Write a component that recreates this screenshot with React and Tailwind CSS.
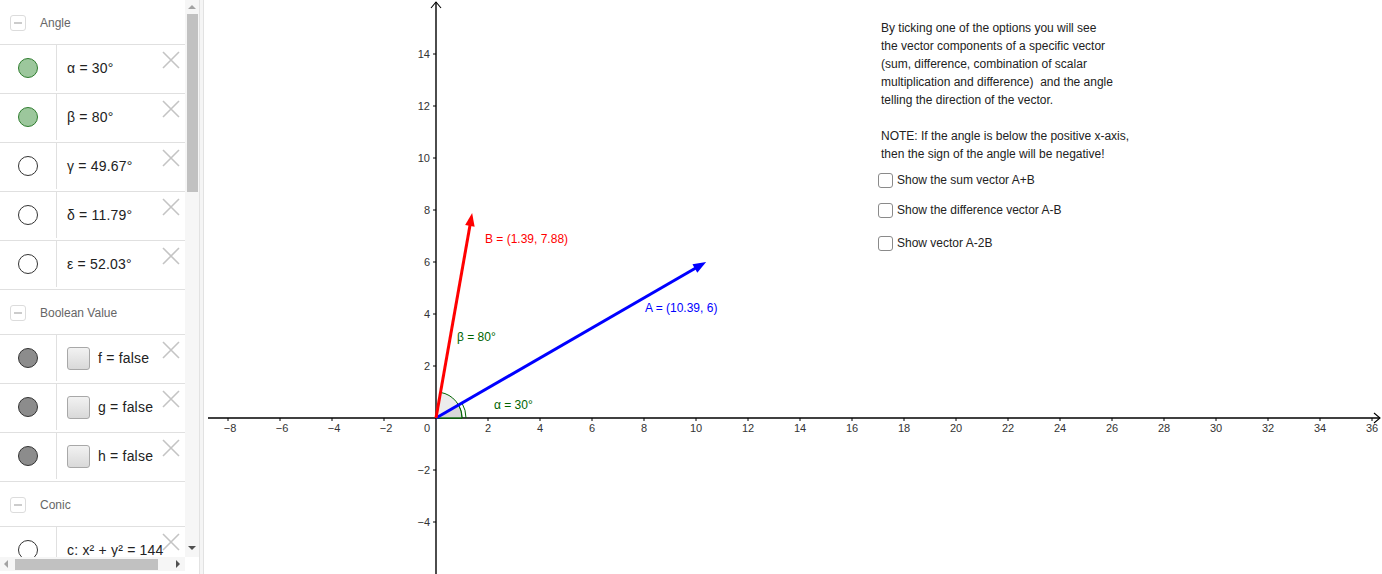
import React from 'react';

const font = { fontFamily: '"Liberation Sans", Arial, sans-serif' };

// small grey cross shown at the top right of each algebra row
const DeleteX = () => (
  <svg className="absolute right-[5px] top-[6px]" width="18" height="18" viewBox="0 0 18 18">
    <path d="M1 1 L17 17 M17 1 L1 17" stroke="#c4c4c4" strokeWidth="1.6" fill="none" />
  </svg>
);

const Marker = ({ kind }) => {
  if (kind === 'green') return <div className="h-[20px] w-[20px] rounded-full border border-[#2f7d2f] bg-[#9cc79c]" />;
  if (kind === 'gray') return <div className="h-[20px] w-[20px] rounded-full border border-[#333] bg-[#8c8c8c]" />;
  return <div className="h-[20px] w-[20px] rounded-full border border-[#333] bg-white" />;
};

const Header = ({ title, first }) => (
  <div className={`flex shrink-0 items-center gap-[14px] pl-[10px] pt-[1px] ${first ? 'h-[44px]' : 'h-[45px] border-t border-[#e0e0e0]'}`}>
    <div className="flex h-[16px] w-[16px] items-center justify-center rounded-[3px] border border-[#dcdcdc]">
      <div className="h-[2px] w-[8px] bg-[#cccccc]" />
    </div>
    <span className="text-[12px] text-[#666]">{title}</span>
  </div>
);

const Row = ({ marker, children, check }) => (
  <div className="relative flex h-[49px] shrink-0 border-t border-[#e0e0e0] pb-[2px]">
    <div className="flex w-[57px] shrink-0 items-center justify-center border-r border-[#e0e0e0]">
      <Marker kind={marker} />
    </div>
    <div className="flex items-center gap-[8px] whitespace-nowrap pl-[10px] text-[14px] text-[#222]">
      {check && (
        <div className="h-[23px] w-[23px] rounded-[3px] border border-[#a8a8a8] bg-gradient-to-b from-[#f2f2f2] to-[#d9d9d9]" />
      )}
      <span className="tracking-[0.2px]">{children}</span>
    </div>
    <DeleteX />
  </div>
);

const Graph = () => {
  const ox = 232;
  const oy = 418;
  const u = 26;
  const px = (x) => ox + x * u;
  const py = (y) => oy - y * u;

  const xs = [];
  for (let k = -8; k <= 36; k += 2) if (k !== 0) xs.push(k);
  const ys = [-4, -2, 2, 4, 6, 8, 10, 12, 14];

  const vec = (x, y, color) => {
    const x2 = px(x);
    const y2 = py(y);
    const a = Math.atan2(y2 - oy, x2 - ox);
    const L = 13;
    const W = 4.8;
    const bx = x2 - L * Math.cos(a);
    const by = y2 - L * Math.sin(a);
    const nx = -Math.sin(a) * W;
    const ny = Math.cos(a) * W;
    return (
      <g>
        <line x1={ox} y1={oy} x2={bx + 2 * Math.cos(a)} y2={by + 2 * Math.sin(a)} stroke={color} strokeWidth="3" />
        <polygon points={`${x2},${y2} ${bx + nx},${by + ny} ${bx - nx},${by - ny}`} fill={color} />
      </g>
    );
  };

  const rad = (d) => (d * Math.PI) / 180;
  const pt = (r, d) => `${ox + r * Math.cos(rad(d))} ${oy - r * Math.sin(rad(d))}`;

  return (
    <svg className="block h-full w-full" viewBox="0 0 1178 574" style={font}>
      {/* axes */}
      <line x1="4" y1={oy} x2="1176" y2={oy} stroke="#000" strokeWidth="1.4" />
      <path d="M1170 413 L1176 418 L1170 423" stroke="#000" strokeWidth="1.1" fill="none" />
      <line x1={ox} y1="574" x2={ox} y2="2" stroke="#000" strokeWidth="1.4" />
      <path d={`M${ox - 5} 8 L${ox} 2 L${ox + 5} 8`} stroke="#000" strokeWidth="1.1" fill="none" />

      {xs.map((k) => (
        <g key={'x' + k}>
          <line x1={px(k)} y1={oy} x2={px(k)} y2={oy + 3} stroke="#000" strokeWidth="1" />
          <text x={px(k) + (k < 0 ? 2 : 0)} y={oy + 14} fontSize="11" fill="#333" textAnchor="middle">
            {k < 0 ? '\u2212' + -k : k}
          </text>
        </g>
      ))}
      <text x={ox - 9} y={oy + 14} fontSize="11" fill="#333" textAnchor="middle">0</text>

      {ys.map((k) => (
        <g key={'y' + k}>
          <line x1={ox - 3} y1={py(k)} x2={ox} y2={py(k)} stroke="#000" strokeWidth="1" />
          <text x={ox - 6} y={py(k) + 4} fontSize="11" fill="#333" textAnchor="end">
            {k < 0 ? '\u2212' + -k : k}
          </text>
        </g>
      ))}

      {/* angle markings */}
      <path d={`M${ox} ${oy} L${pt(26, 0)} A26 26 0 0 0 ${pt(26, 80)} Z`} fill="#dcdcdc" fillOpacity="0.55" stroke="#006400" strokeWidth="1" />
      <path d={`M${ox} ${oy} L${pt(26, 0)} A26 26 0 0 0 ${pt(26, 30)} Z`} fill="#c8c8c8" fillOpacity="0.55" stroke="#006400" strokeWidth="1" />
      <path d={`M${pt(30, 0)} A30 30 0 0 0 ${pt(30, 30)}`} fill="none" stroke="#006400" strokeWidth="1" />

      {vec(10.39, 6, '#0000ff')}
      {vec(1.39, 7.88, '#ff0000')}

      <text x="281" y="243" fontSize="12" fill="#ff0000">B = (1.39, 7.88)</text>
      <text x="441" y="312" fontSize="12" fill="#0000ff">A = (10.39, 6)</text>
      <text x="253" y="341" fontSize="12" fill="#006400">β = 80°</text>
      <text x="290" y="409" fontSize="12" fill="#006400">α = 30°</text>
    </svg>
  );
};

const CheckOption = ({ label, className }) => (
  <div className={`flex h-[18px] items-center gap-[4px] ${className}`}>
    <div className="h-[15px] w-[15px] rounded-[3px] border border-[#8a8a8a] bg-white" />
    <span>{label}</span>
  </div>
);

export default function App() {
  return (
    <div className="flex h-[574px] w-[1382px] overflow-hidden bg-white" style={font}>
      {/* algebra view */}
      <div className="flex w-[199px] shrink-0 flex-col">
        <div className="flex h-[557px]">
          <div className="flex w-[185px] flex-col overflow-hidden">
            <Header title="Angle" first />
            <Row marker="green">α = 30°</Row>
            <Row marker="green">β = 80°</Row>
            <Row marker="empty">γ = 49.67°</Row>
            <Row marker="empty">δ = 11.79°</Row>
            <Row marker="empty">ε = 52.03°</Row>
            <Header title="Boolean Value" />
            <Row marker="gray" check>f = false</Row>
            <Row marker="gray" check>g = false</Row>
            <Row marker="gray" check>h = false</Row>
            <Header title="Conic" />
            <Row marker="empty">c: x² + y² = 144</Row>
          </div>
          {/* vertical scrollbar */}
          <div className="flex w-[14px] flex-col items-center bg-[#f6f6f6]">
            <div className="flex h-[14px] items-center justify-center">
              <div className="h-0 w-0 border-x-[4px] border-b-[4px] border-x-transparent border-b-[#a3a3a3]" />
            </div>
            <div className="h-[178px] w-[11px] bg-[#c1c1c1]" />
            <div className="flex-1" />
            <div className="flex h-[14px] items-center justify-center pb-[4px]">
              <div className="h-0 w-0 border-x-[4px] border-t-[4px] border-x-transparent border-t-[#505050]" />
            </div>
          </div>
        </div>
        {/* horizontal scrollbar */}
        <div className="flex h-[14px]">
          <div className="flex w-[185px] items-center bg-[#f6f6f6]">
            <div className="flex w-[12px] items-center justify-center">
              <div className="h-0 w-0 border-y-[4px] border-r-[4px] border-y-transparent border-r-[#a3a3a3]" />
            </div>
            <div className="ml-[3px] h-[11px] w-[143px] bg-[#c1c1c1]" />
            <div className="flex-1" />
            <div className="flex w-[14px] items-center justify-center">
              <div className="h-0 w-0 border-y-[4px] border-l-[4px] border-y-transparent border-l-[#505050]" />
            </div>
          </div>
          <div className="flex-1 bg-white" />
        </div>
      </div>

      {/* splitter */}
      <div className="w-[5px] shrink-0 border-x border-[#e2e2e2] bg-[#f5f5f5]" />

      {/* graphics view */}
      <div className="relative flex-1">
        <Graph />
        <div className="absolute left-[674px] top-[19px] text-[12px] leading-[18px] text-[#222]">
          <div className="pl-[3px]">
            <p>By ticking one of the options you will see</p>
            <p>the vector components of a specific vector</p>
            <p>(sum, difference, combination of scalar</p>
            <p>multiplication and difference)&nbsp; and the angle</p>
            <p>telling the direction of the vector.</p>
            <p>&nbsp;</p>
            <p>NOTE: If the angle is below the positive x-axis,</p>
            <p>then the sign of the angle will be negative!</p>
          </div>
          <CheckOption className="mt-[8px]" label="Show the sum vector A+B" />
          <CheckOption className="mt-[12px]" label="Show the difference vector A-B" />
          <CheckOption className="mt-[15px]" label="Show vector A-2B" />
        </div>
      </div>
    </div>
  );
}
